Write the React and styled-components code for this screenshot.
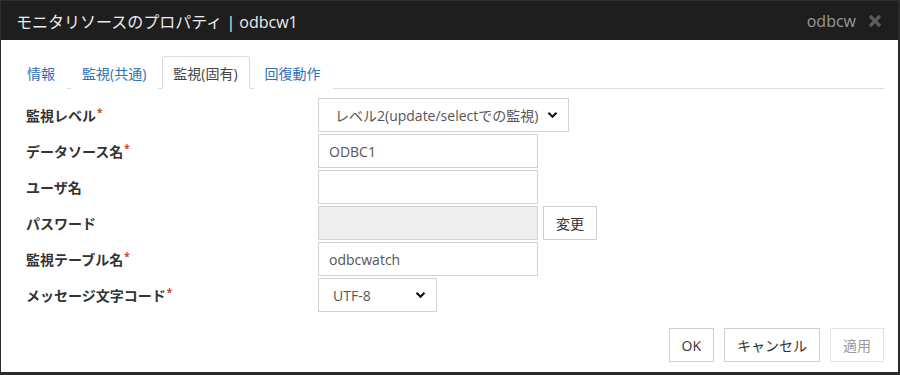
import React from 'react';
import styled, { createGlobalStyle } from 'styled-components';

const GlobalStyle = createGlobalStyle`
    html, body {
        margin: 0;
        padding: 0;
        background: #2b2b2b;
    }
    body {
        font-family: "Open Sans", "Noto Sans CJK JP", sans-serif;
        color: #333;
    }
`;

const Dialog = styled.div`
    width: 897px;
    height: 372px;
    margin-left: 1px;
    display: flex;
    flex-direction: column;
`;

const TitleBar = styled.div`
    height: 40px;
    flex: none;
    background: #1e1e1e;
    display: flex;
    align-items: center;
    padding: 0 16px 0 15px;
    border-top: 1px solid #2e2e2e;
    box-sizing: border-box;
`;

const Title = styled.div`
    flex: 1;
    color: #ececec;
    font-size: 16px;
`;

const Owner = styled.span`
    color: #9a9a9a;
    font-size: 16px;
    margin-right: 12px;
`;

const CloseIcon = styled.svg`
    width: 14px;
    height: 14px;
    display: block;
`;

const Body = styled.div`
    flex: 1;
    background: #fff;
    padding: 16px 14px 10px 15px;
    display: flex;
    flex-direction: column;
`;

const Tabs = styled.ul`
    list-style: none;
    margin: 0;
    padding: 0;
    display: flex;
    height: 32px;
    border-bottom: 1px solid #ddd;
`;

const Tab = styled.li`
    margin-right: 4px;
    margin-bottom: -1px;
    padding: 0 11px 0 10px;
    display: flex;
    align-items: center;
    font-size: 14px;
    color: ${p => (p.active ? '#444' : '#2f72b3')};
    background: #fff;
    border: 1px solid ${p => (p.active ? '#ddd' : 'transparent')};
    border-bottom-color: ${p => (p.active ? '#fff' : 'transparent')};
    border-radius: 3px 3px 0 0;
    cursor: pointer;
`;

const Form = styled.div`
    margin-top: 9px;
    display: flex;
    flex-direction: column;
    gap: 2px;
`;

const Row = styled.div`
    display: grid;
    grid-template-columns: 292px auto;
    align-items: center;
    padding-left: 10px;
`;

const Label = styled.label`
    font-size: 14px;
    font-weight: bold;
    color: #333;
`;

const Required = styled.sup`
    color: #d0432a;
    font-size: 10px;
    margin-left: 1px;
    vertical-align: 5px;
    line-height: 0;
`;

const Controls = styled.div`
    display: flex;
    align-items: center;
    gap: 5px;
`;

const Input = styled.div`
    width: ${p => p.width || 220}px;
    height: 34px;
    box-sizing: border-box;
    border: 1px solid #d3d3d3;
    background: ${p => (p.disabled ? '#eee' : '#fff')};
    padding: 0 10px;
    display: flex;
    align-items: center;
    justify-content: space-between;
    font-size: 14px;
    color: #555;
    white-space: nowrap;
`;

const SelectText = styled.span`
    padding-left: ${p => p.indent || 0}px;
`;

const Chevron = styled.svg`
    width: 11px;
    height: 8px;
    flex: none;
`;

const Footer = styled.div`
    margin-top: auto;
    display: flex;
    justify-content: flex-end;
    gap: 10px;
`;

const Button = styled.button`
    height: 34px;
    padding: 0 12px;
    background: #fff;
    border: 1px solid ${p => (p.disabled ? '#e3e3e3' : '#cfcfcf')};
    color: ${p => (p.disabled ? '#999' : '#333')};
    font-family: inherit;
    font-size: 14px;
    cursor: ${p => (p.disabled ? 'default' : 'pointer')};
`;

const ChevronDown = () => (
    <Chevron viewBox="0 0 11 8">
        <polyline points="1.5,1.8 5.5,5.8 9.5,1.8" fill="none" stroke="#111" strokeWidth="2.2" />
    </Chevron>
);

const Select = ({ value, width, indent }) => (
    <Input width={width}>
        <SelectText indent={indent}>{value}</SelectText>
        <ChevronDown />
    </Input>
);

const fields = [
    { label: '監視レベル', required: true, select: true, value: 'レベル2(update/selectでの監視)', width: 251, indent: 6 },
    { label: 'データソース名', required: true, value: 'ODBC1' },
    { label: 'ユーザ名', value: '' },
    { label: 'パスワード', value: '', disabled: true, action: '変更' },
    { label: '監視テーブル名', required: true, value: 'odbcwatch' },
    { label: 'メッセージ文字コード', required: true, select: true, value: 'UTF-8', width: 119, indent: 4 },
];

const tabs = ['情報', '監視(共通)', '監視(固有)', '回復動作'];

const App = () => {
    return (
        <Dialog>
            <GlobalStyle />
            <TitleBar>
                <Title>モニタリソースのプロパティ | odbcw1</Title>
                <Owner>odbcw</Owner>
                <CloseIcon viewBox="0 0 14 14">
                    <path d="M2 2 L12 12 M12 2 L2 12" stroke="#5c5c5c" strokeWidth="3.2" />
                </CloseIcon>
            </TitleBar>
            <Body>
                <Tabs>
                    {tabs.map((t, i) => (
                        <Tab key={t} active={i === 2}>{t}</Tab>
                    ))}
                </Tabs>
                <Form>
                    {fields.map(f => (
                        <Row key={f.label}>
                            <Label>
                                {f.label}
                                {f.required && <Required>*</Required>}
                            </Label>
                            <Controls>
                                {f.select ? (
                                    <Select value={f.value} width={f.width} indent={f.indent} />
                                ) : (
                                    <Input disabled={f.disabled}>{f.value}</Input>
                                )}
                                {f.action && <Button>{f.action}</Button>}
                            </Controls>
                        </Row>
                    ))}
                </Form>
                <Footer>
                    <Button>OK</Button>
                    <Button>キャンセル</Button>
                    <Button disabled>適用</Button>
                </Footer>
            </Body>
        </Dialog>
    );
};

export default App;
